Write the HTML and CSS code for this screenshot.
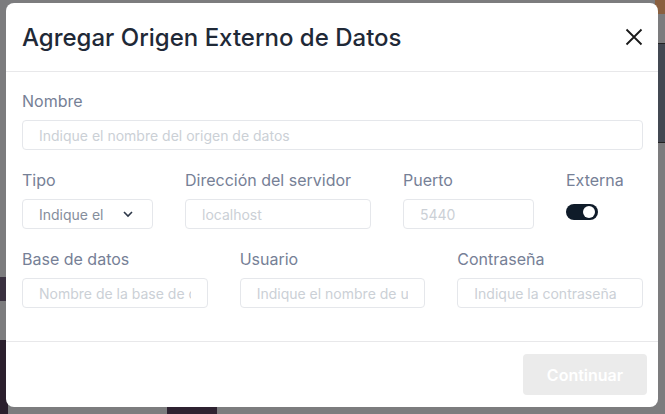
FILE: index.html
```html
<!DOCTYPE html>
<html>
<head>
	<meta charset="utf-8">
	<title>Agregar Origen Externo de Datos</title>
	<link rel="stylesheet" href="styles.css">
</head>
<body>
<div class="backdrop">
	<div class="bg-patch patch-left"></div>
	<div class="bg-patch patch-left2"></div>
	<div class="bg-patch patch-right"></div>
	<div class="bg-patch patch-bottom"></div>
	<div class="bg-patch patch-corner"></div>
</div>

<div class="modal">
	<div class="modal-header">
		<h2 class="modal-title">Agregar Origen Externo de Datos</h2>
		<button class="btn-close" type="button">
			<svg width="18" height="18" viewBox="0 0 18 18"><path d="M1.5 1.5L16.5 16.5M16.5 1.5L1.5 16.5" stroke="#1a1a1a" stroke-width="1.8" fill="none"/></svg>
		</button>
	</div>

	<div class="modal-body">
		<div class="field">
			<label>Nombre</label>
			<input type="text" placeholder="Indique el nombre del origen de datos">
		</div>

		<div class="row row-server">
			<div class="field">
				<label>Tipo</label>
				<div class="select">
					<span>Indique el</span>
					<svg width="12" height="8" viewBox="0 0 12 8"><path d="M2 2l4 4 4-4" stroke="#2d3748" stroke-width="1.6" fill="none"/></svg>
				</div>
			</div>
			<div class="field">
				<label>Dirección del servidor</label>
				<input type="text" placeholder="localhost">
			</div>
			<div class="field">
				<label>Puerto</label>
				<input type="text" placeholder="5440">
			</div>
			<div class="field">
				<label>Externa</label>
				<div class="switch on"><span class="knob"></span></div>
			</div>
		</div>

		<div class="row row-db">
			<div class="field">
				<label>Base de datos</label>
				<input type="text" placeholder="Nombre de la base de datos">
			</div>
			<div class="field">
				<label>Usuario</label>
				<input type="text" placeholder="Indique el nombre de usuario">
			</div>
			<div class="field">
				<label>Contraseña</label>
				<input type="password" placeholder="Indique la contraseña">
			</div>
		</div>
	</div>

	<div class="modal-footer">
		<button class="btn-primary" type="button" disabled>Continuar</button>
	</div>
</div>
</body>
</html>
```

FILE: styles.css
```css
* { box-sizing: border-box; }
html, body { margin: 0; padding: 0; }
body { width: 665px; height: 414px; overflow: hidden; position: relative; background: #7b7b7d; font-family: Inter, "Noto Sans", sans-serif; }

/* page behind the overlay */
.backdrop { position: absolute; inset: 0; background: #7c7c7e; }
.bg-patch { position: absolute; }
.patch-left { left: 0; top: 277px; width: 8px; height: 24px; background: #3a3140; }
.patch-left2 { left: 0; top: 340px; width: 8px; height: 74px; background: #2b1f2d; }
.patch-right { right: 0; top: 43px; width: 8px; height: 100px; background: #434852; border-top: 1px solid #222; border-bottom: 1px solid #222; }
.patch-bottom { left: 167px; top: 406px; width: 50px; height: 8px; background: #2e2231; }
.patch-corner { right: 0; top: 0; width: 10px; height: 14px; background: #8a6040; }

.modal { position: absolute; left: 6px; top: 3px; width: 652px; height: 404px; background: #fff; border-radius: 8px; display: flex; flex-direction: column; }

.modal-header { height: 69px; display: flex; align-items: center; justify-content: space-between; padding: 0 16px 0 16px; border-bottom: 1px solid #e8e8ea; }
.modal-title { margin: 0; font-size: 24px; font-weight: 500; color: #1f2937; }
.btn-close { border: 0; background: none; padding: 0; width: 24px; height: 24px; display: flex; align-items: center; justify-content: center; margin-right: -4px; }

.modal-body { flex: 1; padding: 17px 15px 0 16px; display: flex; flex-direction: column; gap: 18px; }
.field { display: flex; flex-direction: column; }
.field label { font-size: 16px; line-height: 24px; color: #768096; margin-bottom: 7px; }
.field input, .select { height: 30px; border: 1px solid #e5e7eb; border-radius: 4px; padding: 0 16px; font: 14px Inter, sans-serif; color: #4a5568; outline: none; width: 100%; }
.field input::placeholder { color: #cbd0d6; }

.select { display: flex; align-items: center; justify-content: space-between; color: #858e9c; padding-right: 18px; }

.row { display: grid; column-gap: 32px; }
.row-server { grid-template-columns: 131px 186px 131px 1fr; }
.row-db { grid-template-columns: 1fr 1fr 1fr; }

.switch { width: 32px; height: 16px; border-radius: 8px; background: #0f1b29; position: relative; margin-top: 5px; }
.switch .knob { position: absolute; right: 3px; top: 2px; width: 12px; height: 12px; border-radius: 50%; background: #fff; }

.modal-footer { height: 66px; border-top: 1px solid #e8e8ea; display: flex; align-items: center; justify-content: flex-end; padding: 0 11px; }
.btn-primary { width: 124px; height: 41px; border: 0; border-radius: 4px; background: #ebebeb; color: #fff; font: 600 16px Inter, sans-serif; }
```
